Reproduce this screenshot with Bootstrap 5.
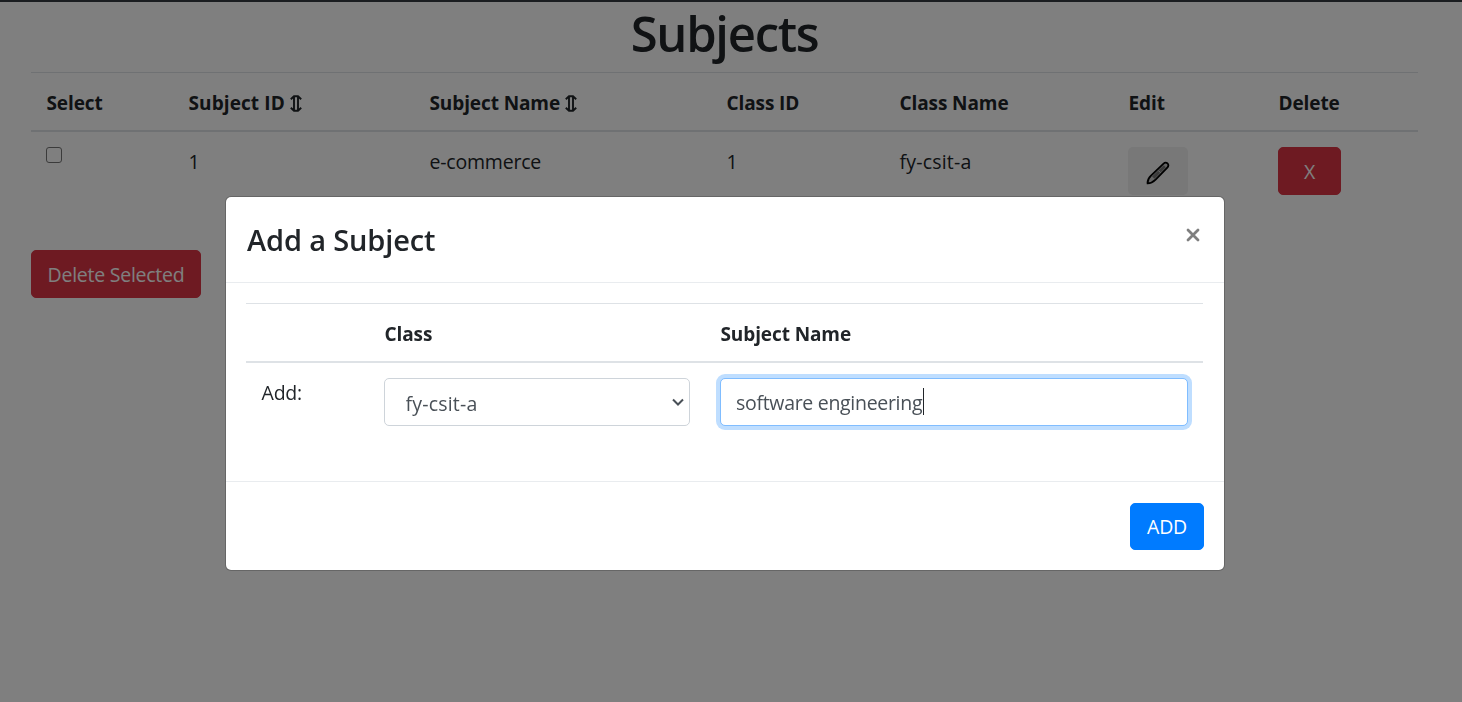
<!DOCTYPE html>
<html lang="en">
<head>
<meta charset="utf-8">
<meta name="viewport" content="width=device-width, initial-scale=1">
<title>Subjects</title>
<link href="https://cdn.jsdelivr.net/npm/bootstrap@5.3.0/dist/css/bootstrap.min.css" rel="stylesheet">
<style>
  body { font-family: "Open Sans", "Noto Sans", sans-serif; font-size: 19.5px; letter-spacing: -.2px; line-height: 30px; color: #212529; height: 702px; overflow: hidden; }
  .topbar { height: 2px; background: #343a40; }
  .page { margin: 0 44px 0 31px; }
  .page-title { font-size: 49px; font-weight: 600; letter-spacing: -1.3px; line-height: 60px; height: 70px; padding-top: 1px; margin: 0; }
  .grid-table { table-layout: fixed; margin: 0; color: #212529; border-collapse: separate; border-spacing: 0; }
  .grid-table > thead > tr > th { height: 60px; padding: 15px 0 12px 15.5px; border-top: 1px solid #dee2e6; border-bottom: 2px solid #dee2e6; font-weight: 700; vertical-align: top; white-space: nowrap; font-size: 19px; letter-spacing: -.1px; }
  .grid-table > thead > tr > th.wide-id { letter-spacing: .1px; }
  .grid-table > tbody > tr > td { padding: 15px 15px 15px 15.5px; border: 0; vertical-align: top; }
  .grid-table > tbody > tr > td.control-cell { padding-left: 15px; }
  .class-name { letter-spacing: .2px; }
  .btn { font-size: 19.5px; letter-spacing: -.25px; line-height: 30px; height: 48px; padding: 9px 15px 7px; border-radius: 5px; }
  .btn-danger { --bs-btn-bg: #dc3545; --bs-btn-border-color: #dc3545; }
  .btn-edit { width: 60px; background: #f0f0f0; }
  .btn-x { width: 63px; }
  .btn-all { width: 170px; padding-left: 0; padding-right: 0; margin-top: 40px; }
  .tick { display: block; width: 16px; height: 16px; border: 1px solid #767676; border-radius: 3px; background: #fff; }
  .arrows { vertical-align: -2px; }
  .modal { background: rgba(0, 0, 0, .5); overflow: hidden; }
  .modal-dialog { width: 1000px; max-width: none; margin: 196px 0 0 225px; }
  .modal-content { border: 1px solid rgba(0, 0, 0, .2); border-radius: 6px; height: 375px; background-clip: padding-box; }
  .modal-header { height: 86px; padding: 0 20px; border-color: #e9ecef; }
  .modal-title { font-size: 29px; font-weight: 600; letter-spacing: -.15px; line-height: 38px; padding-left: 1px; }
  .modal-body { padding: 20px; }
  .modal-footer { height: 89px; padding: 0 20px; border-color: #e9ecef; }
  .modal-footer > * { margin: 0; }
  .modal .grid-table { width: 957px; }
  .form-select, .form-control { height: 48px; border: 1px solid #ced4da; border-radius: 5px; color: #495057; font-size: 19.5px; line-height: 30px; padding: 8px 15px; }
  .form-select { padding: 10px 30px 6px 20.5px; letter-spacing: .2px; background-position: right 3px center; background-size: 16px 12px;
    background-image: url("data:image/svg+xml,%3Csvg xmlns='http://www.w3.org/2000/svg' viewBox='0 0 16 12'%3E%3Cpath d='M3 3.5l5 5 5-5' fill='none' stroke='%23495057' stroke-width='2'/%3E%3C/svg%3E"); }
  .form-control { letter-spacing: -.3px; }
  .form-control.active-field { border-color: #80bdff; box-shadow: 0 0 0 4px #bfdeff; }
  .caret { top: 10px; left: 203px; width: 1px; height: 27px; background: #212529; }
  .btn-add { width: 74px; height: 47px; padding: 8px 0 6px; --bs-btn-bg: #007bff; --bs-btn-border-color: #007bff; }
</style>
</head>
<body>
<div class="topbar"></div>
<main class="page">
  <h1 class="page-title text-center">Subjects</h1>
  <table class="table grid-table">
    <colgroup><col style="width:142px"><col style="width:241px"><col style="width:297px"><col style="width:173px"><col style="width:229px"><col style="width:150px"><col style="width:155px"></colgroup>
    <thead>
      <tr>
        <th>Select</th>
        <th class="wide-id">Subject ID <svg class="arrows" width="12" height="17" viewBox="0 0 12 17" fill="none" stroke="#212529" stroke-width="1.9"><path d="M.8 4.200 4 1.200h4l3.200 3M.8 12.800 4 15.800h4l3.200-3M4 2v13M8 2v13"/></svg></th>
        <th>Subject Name <svg class="arrows" width="12" height="17" viewBox="0 0 12 17" fill="none" stroke="#212529" stroke-width="1.9"><path d="M.8 4.200 4 1.200h4l3.200 3M.8 12.800 4 15.800h4l3.200-3M4 2v13M8 2v13"/></svg></th>
        <th>Class ID</th>
        <th>Class Name</th>
        <th>Edit</th>
        <th>Delete</th>
      </tr>
    </thead>
    <tbody>
      <tr>
        <td class="control-cell"><span class="tick"></span></td>
        <td>1</td>
        <td>e-commerce</td>
        <td>1</td>
        <td class="class-name">fy-csit-a</td>
        <td class="control-cell"><button class="btn btn-edit d-flex align-items-center justify-content-center p-0" type="button" aria-label="Edit"><svg class="mt-1" width="24" height="24" viewBox="0 0 24 24"><path d="M1.600 22.400C1.300 19.500 2.600 17 5 14.600L17.300 2.800c1.500-1.400 3-1.500 4.200-.4s1.200 2.700-.2 4.200L9.600 18.700c-2.500 2.500-4.800 3.700-8 3.700z" fill="#c8c8c8" stroke="#000" stroke-width="1.800"/><path d="M6 15.500 17.800 4.200l2 2L8.500 17.700z" fill="#777"/><path d="m12.300 9.500 2.300 2.300" stroke="#ddd"/></svg></button></td>
        <td class="control-cell"><button class="btn btn-danger btn-x" type="button">X</button></td>
      </tr>
    </tbody>
  </table>
  <button class="btn btn-danger btn-all" type="button">Delete Selected</button>
</main>

<div class="modal show d-block" tabindex="-1" role="dialog">
  <div class="modal-dialog">
    <div class="modal-content">
      <div class="modal-header d-flex justify-content-between">
        <h5 class="modal-title">Add a Subject</h5>
        <svg class="mb-2 me-1" width="14" height="16" viewBox="0 0 14 16" stroke="#7f7f7f" stroke-width="2.800" stroke-linecap="round"><path d="m2 2 10 10M12 2 2 12"/></svg>
      </div>
      <div class="modal-body">
        <table class="table grid-table">
          <colgroup><col style="width:123px"><col style="width:336px"><col style="width:498px"></colgroup>
          <thead><tr><th></th><th>Class</th><th>Subject Name</th></tr></thead>
          <tbody>
            <tr>
              <td>Add:</td>
              <td class="control-cell"><select class="form-select"><option>fy-csit-a</option></select></td>
              <td class="control-cell"><div class="position-relative"><input class="form-control active-field" type="text" value="software engineering"><span class="caret position-absolute"></span></div></td>
            </tr>
          </tbody>
        </table>
      </div>
      <div class="modal-footer">
        <button class="btn btn-primary btn-add" type="button">ADD</button>
      </div>
    </div>
  </div>
</div>
<script src="https://cdn.jsdelivr.net/npm/bootstrap@5.3.0/dist/js/bootstrap.bundle.min.js"></script>
</body>
</html>
